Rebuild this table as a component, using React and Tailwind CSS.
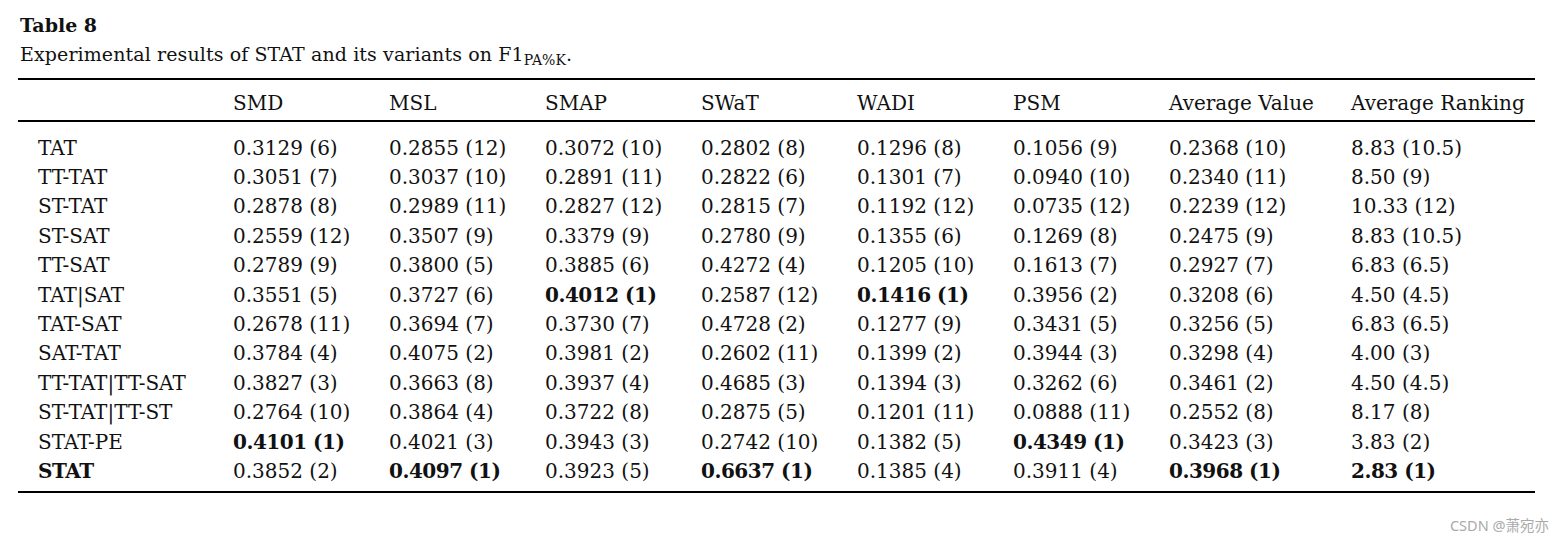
import React from "react";

const headers = ["SMD", "MSL", "SMAP", "SWaT", "WADI", "PSM", "Average Value", "Average Ranking"];

// "*" prefix marks a bold cell
const rows = [
  ["TAT", "0.3129 (6)", "0.2855 (12)", "0.3072 (10)", "0.2802 (8)", "0.1296 (8)", "0.1056 (9)", "0.2368 (10)", "8.83 (10.5)"],
  ["TT-TAT", "0.3051 (7)", "0.3037 (10)", "0.2891 (11)", "0.2822 (6)", "0.1301 (7)", "0.0940 (10)", "0.2340 (11)", "8.50 (9)"],
  ["ST-TAT", "0.2878 (8)", "0.2989 (11)", "0.2827 (12)", "0.2815 (7)", "0.1192 (12)", "0.0735 (12)", "0.2239 (12)", "10.33 (12)"],
  ["ST-SAT", "0.2559 (12)", "0.3507 (9)", "0.3379 (9)", "0.2780 (9)", "0.1355 (6)", "0.1269 (8)", "0.2475 (9)", "8.83 (10.5)"],
  ["TT-SAT", "0.2789 (9)", "0.3800 (5)", "0.3885 (6)", "0.4272 (4)", "0.1205 (10)", "0.1613 (7)", "0.2927 (7)", "6.83 (6.5)"],
  ["TAT|SAT", "0.3551 (5)", "0.3727 (6)", "*0.4012 (1)", "0.2587 (12)", "*0.1416 (1)", "0.3956 (2)", "0.3208 (6)", "4.50 (4.5)"],
  ["TAT-SAT", "0.2678 (11)", "0.3694 (7)", "0.3730 (7)", "0.4728 (2)", "0.1277 (9)", "0.3431 (5)", "0.3256 (5)", "6.83 (6.5)"],
  ["SAT-TAT", "0.3784 (4)", "0.4075 (2)", "0.3981 (2)", "0.2602 (11)", "0.1399 (2)", "0.3944 (3)", "0.3298 (4)", "4.00 (3)"],
  ["TT-TAT|TT-SAT", "0.3827 (3)", "0.3663 (8)", "0.3937 (4)", "0.4685 (3)", "0.1394 (3)", "0.3262 (6)", "0.3461 (2)", "4.50 (4.5)"],
  ["ST-TAT|TT-ST", "0.2764 (10)", "0.3864 (4)", "0.3722 (8)", "0.2875 (5)", "0.1201 (11)", "0.0888 (11)", "0.2552 (8)", "8.17 (8)"],
  ["STAT-PE", "*0.4101 (1)", "0.4021 (3)", "0.3943 (3)", "0.2742 (10)", "0.1382 (5)", "*0.4349 (1)", "0.3423 (3)", "3.83 (2)"],
  ["*STAT", "0.3852 (2)", "*0.4097 (1)", "0.3923 (5)", "*0.6637 (1)", "0.1385 (4)", "0.3911 (4)", "*0.3968 (1)", "*2.83 (1)"],
];

const widths = ["w-[215px]", "w-[156px]", "w-[156px]", "w-[156px]", "w-[156px]", "w-[156px]", "w-[156px]", "w-[182px]", "w-[184px]"];

function Cell({ value, i }) {
  const bold = value.startsWith("*");
  const text = bold ? value.slice(1) : value;
  return (
    <td className={`${widths[i]} ${i === 0 ? "pl-[20px]" : ""} h-[29.4px] p-0 whitespace-nowrap ${bold ? "font-bold tracking-[-0.5px]" : ""}`}>
      {text}
    </td>
  );
}

export default function App() {
  return (
    <div className="w-[1564px] h-[543px] bg-white text-[#111] relative" style={{ fontFamily: '"DejaVu Serif", serif' }}>
      <div className="pl-[20px] pt-[12px]">
        <div className="text-[19px] font-bold leading-[27px]">Table 8</div>
        <div className="text-[19px] leading-[30px] tracking-[0.1px]">
          Experimental results of STAT and its variants on F1<sub className="text-[14px]">PA%K</sub>.
        </div>
      </div>
      <table className="ml-[18px] mt-[9px] w-[1517px] border-collapse table-fixed text-[20px] leading-[24px]">
        <thead>
          <tr className="border-t-2 border-b-2 border-black">
            <th className="w-[215px] h-[42px] p-0"></th>
            {headers.map((h, i) => (
              <th key={h} className={`${widths[i + 1]} h-[42px] p-0 pt-[6px] text-left font-normal whitespace-nowrap`}>
                {h}
              </th>
            ))}
          </tr>
        </thead>
        <tbody className="border-b-2 border-black">
          <tr><td colSpan={9} className="h-[12px] p-0"></td></tr>
          {rows.map((r) => (
            <tr key={r[0]}>
              {r.map((v, i) => (
                <Cell key={i} value={v} i={i} />
              ))}
            </tr>
          ))}
          <tr><td colSpan={9} className="h-[6px] p-0"></td></tr>
        </tbody>
      </table>
      <div className="absolute right-[15px] bottom-[6px] text-[14.5px] text-[#aaa]" style={{ fontFamily: '"Noto Sans", "Noto Sans CJK SC", sans-serif' }}>
        CSDN @萧宛亦
      </div>
    </div>
  );
}
